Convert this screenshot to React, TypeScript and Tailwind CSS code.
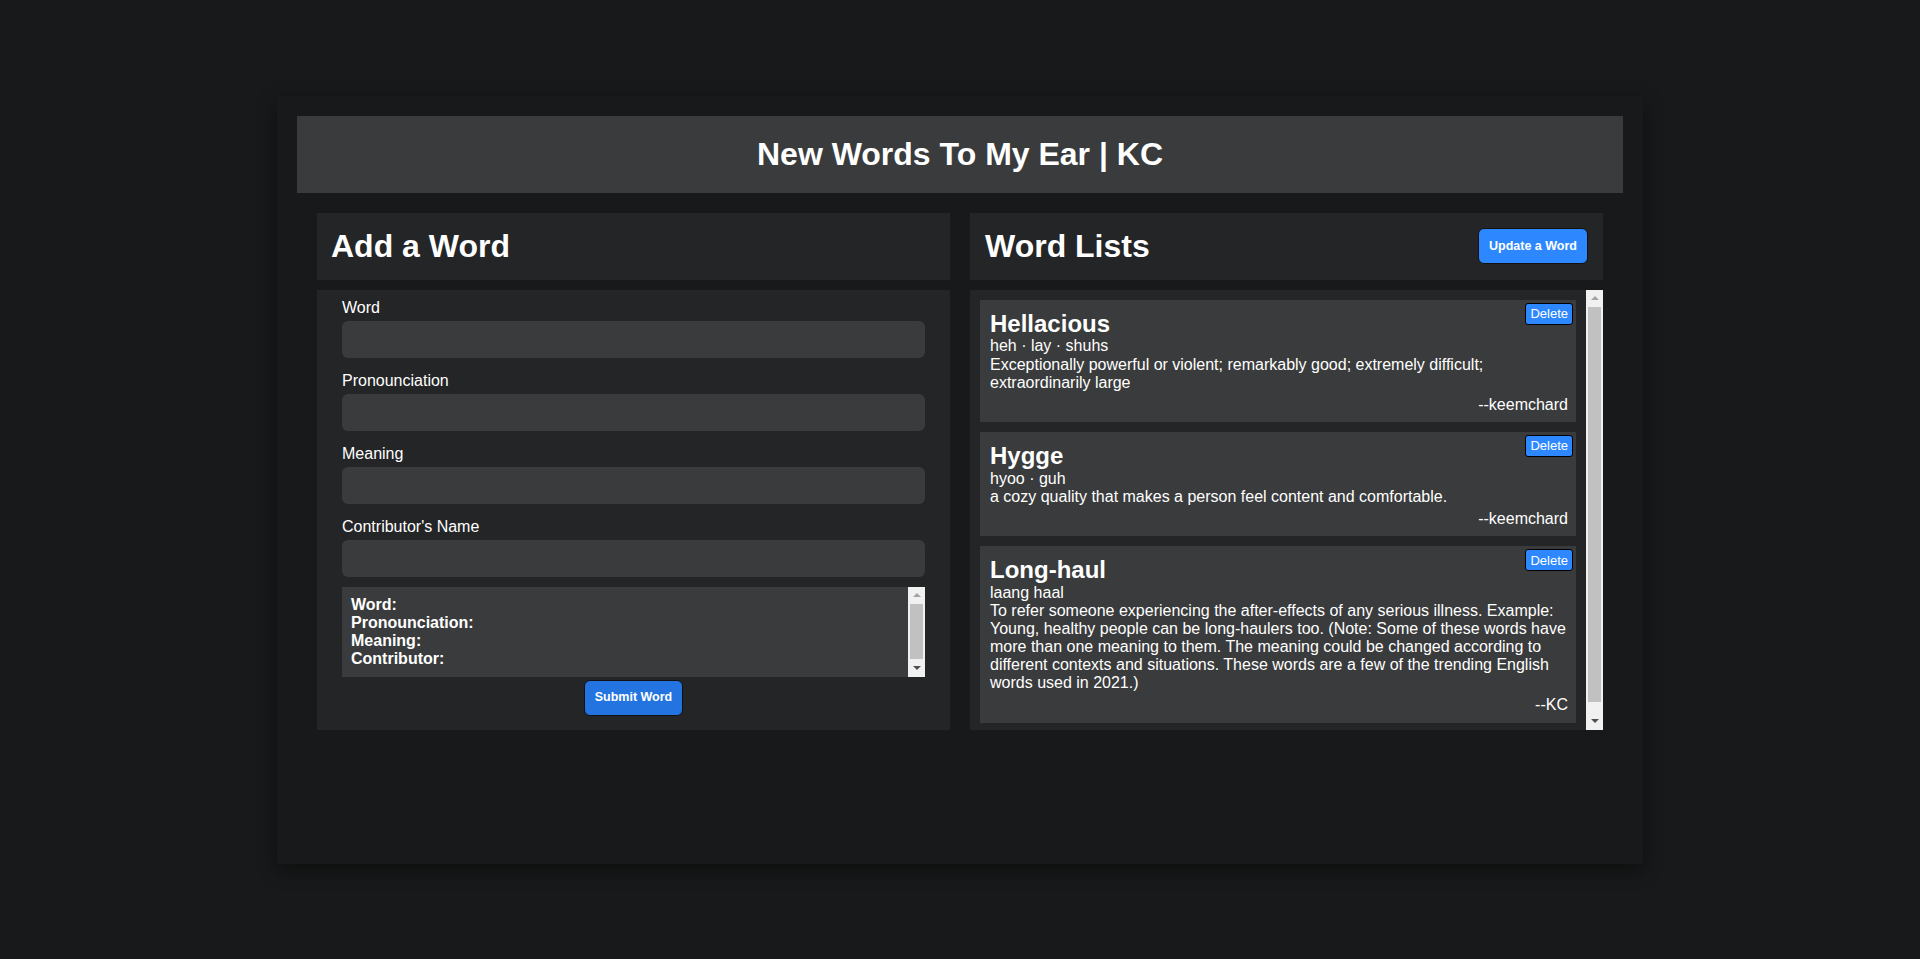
import React from 'react';

const words = [
  {
    word: 'Hellacious',
    sound: 'heh · lay · shuhs',
    meaning: 'Exceptionally powerful or violent; remarkably good; extremely difficult; extraordinarily large',
    by: 'keemchard',
  },
  {
    word: 'Hygge',
    sound: 'hyoo · guh',
    meaning: 'a cozy quality that makes a person feel content and comfortable.',
    by: 'keemchard',
  },
  {
    word: 'Long-haul',
    sound: 'laang haal',
    meaning:
      'To refer someone experiencing the after-effects of any serious illness. Example: Young, healthy people can be long-haulers too. (Note: Some of these words have more than one meaning to them. The meaning could be changed according to different contexts and situations. These words are a few of the trending English words used in 2021.)',
    by: 'KC',
  },
];

const fields = ['Word', 'Pronounciation', 'Meaning', "Contributor's Name"];

// classic light scrollbar, drawn since the headless page hides native ones
function Scrollbar({ gap }: { gap: 'small' | 'large' }) {
  return (
    <div className="w-[17px] shrink-0 bg-[#f1f1f1] flex flex-col">
      <div className="h-[17px] flex items-center justify-center">
        <svg width="8" height="4" viewBox="0 0 8 4">
          <path d="M4 0L8 4H0z" fill="#a3a3a3" />
        </svg>
      </div>
      <div className={gap === 'large' ? 'flex-1 px-[2px] pb-[11px]' : 'flex-1 px-[2px] pb-[1px]'}>
        <div className="h-full bg-[#c1c1c1]" />
      </div>
      <div className="h-[17px] flex items-center justify-center">
        <svg width="8" height="4" viewBox="0 0 8 4">
          <path d="M0 0H8L4 4z" fill="#505050" />
        </svg>
      </div>
    </div>
  );
}

export default function App() {
  return (
    <div className="min-h-screen bg-[#18191a] flex items-center justify-center text-white font-['Liberation_Sans',Arial,sans-serif]">
      <div className="w-[1366px] h-[768px] bg-[#18191a] p-[20px] shadow-[0_6px_18px_rgba(0,0,0,0.45)]">
        {/* Title bar */}
        <header className="bg-[#3a3b3c] py-[20px] text-center">
          <h1 className="text-[32px] leading-[37px] font-bold">New Words To My Ear | KC</h1>
        </header>

        <div className="grid grid-cols-2 gap-[20px] px-[20px] mt-[20px]">
          {/* Left: form */}
          <section className="flex flex-col">
            <div className="bg-[#242526] px-[14px] py-[15px]">
              <h2 className="text-[32px] leading-[37px] font-bold">Add a Word</h2>
            </div>
            <form
              className="bg-[#242526] mt-[10px] h-[440px] px-[25px] pt-[9px] flex flex-col"
              onSubmit={(e) => e.preventDefault()}
            >
              {fields.map((f) => (
                <label key={f} className="block mb-[14px]">
                  <span className="block text-[16px] leading-[18px]">{f}</span>
                  <input className="mt-[4px] block w-full h-[37px] rounded-md bg-[#3a3b3c] outline-none px-[10px] text-[16px]" />
                </label>
              ))}
              <div className="-mt-[4px] h-[90px] flex bg-[#3a3b3c]">
                <div className="flex-1 overflow-hidden pl-[9px] pt-[9px] text-[16px] leading-[18px] font-bold">
                  <div>Word:</div>
                  <div>Pronounciation:</div>
                  <div>Meaning:</div>
                  <div>Contributor:</div>
                </div>
                <Scrollbar gap="small" />
              </div>
              <div className="flex justify-center mt-[3px]">
                <button className="h-[36px] px-[10px] rounded-md bg-[#2374e1] border border-[#111] text-[12.5px] font-bold">
                  Submit Word
                </button>
              </div>
            </form>
          </section>

          {/* Right: list */}
          <section className="flex flex-col">
            <div className="bg-[#242526] pl-[15px] pr-[15px] py-[15px] flex items-center justify-between">
              <h2 className="text-[32px] leading-[37px] font-bold">Word Lists</h2>
              <button className="h-[36px] w-[110px] rounded-md bg-[#2d88ff] border border-[#111] text-[12.5px] font-bold">
                Update a Word
              </button>
            </div>
            <div className="bg-[#242526] mt-[10px] h-[440px] flex">
              <div className="flex-1 overflow-hidden p-[10px] flex flex-col gap-[10px]">
                {words.map((w) => (
                  <article key={w.word} className="relative shrink-0 bg-[#3a3b3c] pl-[10px] pr-[8px] pt-[10px] pb-[8px]">
                    <button className="absolute top-[3px] right-[3px] h-[22px] px-[4px] rounded-[3px] bg-[#2d88ff] border border-black text-[13px] leading-none">
                      Delete
                    </button>
                    <h3 className="text-[24px] leading-[27.6px] font-bold">{w.word}</h3>
                    <p className="text-[16px] leading-[18.4px]">{w.sound}</p>
                    <p className="text-[16px] leading-[18px]">{w.meaning}</p>
                    <p className="text-[16px] leading-[18.4px] text-right mt-[4px]">--{w.by}</p>
                  </article>
                ))}
              </div>
              <Scrollbar gap="large" />
            </div>
          </section>
        </div>
      </div>
    </div>
  );
}
